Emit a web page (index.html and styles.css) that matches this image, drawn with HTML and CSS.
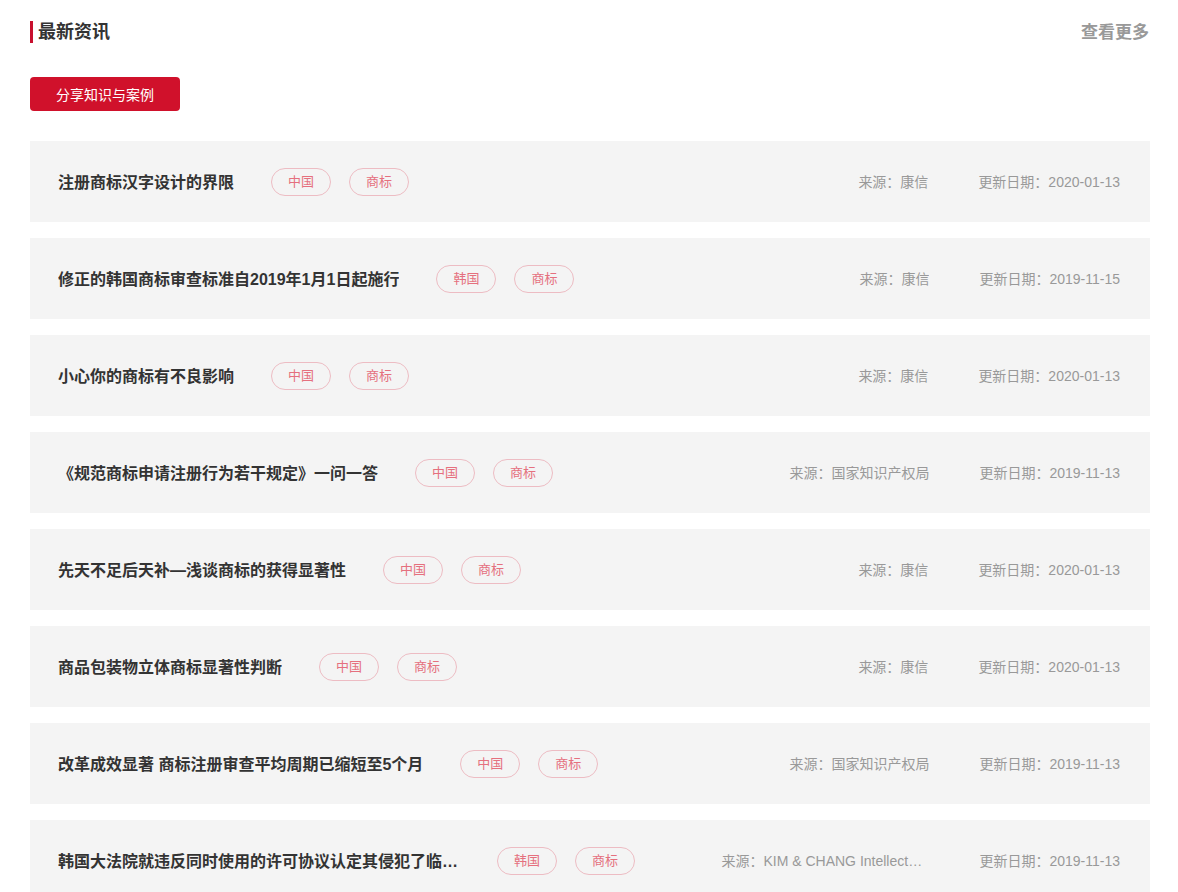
FILE: index.html
```html
<!DOCTYPE html>
<html lang="zh-CN">
<head>
    <meta charset="UTF-8">
    <title>最新资讯</title>
    <link rel="stylesheet" href="styles.css">
</head>
<body>
    <div class="news">
        <div class="news-head">
            <h2 class="news-title">最新资讯</h2>
            <a class="more" href="#">查看更多</a>
        </div>
        <button class="cat-btn">分享知识与案例</button>

        <ul class="news-list">
            <li class="item">
                <span class="item-title">注册商标汉字设计的界限</span>
                <span class="tag">中国</span><span class="tag">商标</span>
                <span class="source">来源：康信</span>
                <span class="date">更新日期：2020-01-13</span>
            </li>
            <li class="item">
                <span class="item-title">修正的韩国商标审查标准自2019年1月1日起施行</span>
                <span class="tag">韩国</span><span class="tag">商标</span>
                <span class="source">来源：康信</span>
                <span class="date">更新日期：2019-11-15</span>
            </li>
            <li class="item">
                <span class="item-title">小心你的商标有不良影响</span>
                <span class="tag">中国</span><span class="tag">商标</span>
                <span class="source">来源：康信</span>
                <span class="date">更新日期：2020-01-13</span>
            </li>
            <li class="item">
                <span class="item-title">《规范商标申请注册行为若干规定》一问一答</span>
                <span class="tag">中国</span><span class="tag">商标</span>
                <span class="source">来源：国家知识产权局</span>
                <span class="date">更新日期：2019-11-13</span>
            </li>
            <li class="item">
                <span class="item-title">先天不足后天补—浅谈商标的获得显著性</span>
                <span class="tag">中国</span><span class="tag">商标</span>
                <span class="source">来源：康信</span>
                <span class="date">更新日期：2020-01-13</span>
            </li>
            <li class="item">
                <span class="item-title">商品包装物立体商标显著性判断</span>
                <span class="tag">中国</span><span class="tag">商标</span>
                <span class="source">来源：康信</span>
                <span class="date">更新日期：2020-01-13</span>
            </li>
            <li class="item">
                <span class="item-title">改革成效显著 商标注册审查平均周期已缩短至5个月</span>
                <span class="tag">中国</span><span class="tag">商标</span>
                <span class="source">来源：国家知识产权局</span>
                <span class="date">更新日期：2019-11-13</span>
            </li>
            <li class="item">
                <span class="item-title">韩国大法院就违反同时使用的许可协议认定其侵犯了临时商标权</span>
                <span class="tag">韩国</span><span class="tag">商标</span>
                <span class="source">来源：KIM &amp; CHANG Intellectual Property</span>
                <span class="date">更新日期：2019-11-13</span>
            </li>
        </ul>
    </div>
</body>
</html>
```

FILE: styles.css
```css
body {
    margin: 0;
    background-color: #fff;
    font-family: "Liberation Sans", "Noto Sans CJK SC", sans-serif;
    color: #333;
}
.news {
    width: 1120px;
    padding: 19px 28px 0 30px;
}
.news-head {
    display: flex;
    justify-content: space-between;
    align-items: center;
    height: 26px;
    padding-right: 1px;
}
.news-title {
    margin: 0;
    padding-left: 5px;
    border-left: 3px solid #c8102e;
    font-size: 18px;
    line-height: 22px;
    font-weight: bold;
    color: #333;
}
.more {
    font-size: 17px;
    font-weight: bold;
    color: #999;
    text-decoration: none;
    margin-top: -4px;
}
.cat-btn {
    display: block;
    margin-top: 32px;
    width: 150px;
    height: 34px;
    border: none;
    border-radius: 4px;
    background-color: #d0112b;
    color: #fff;
    font-family: inherit;
    font-size: 14px;
    cursor: pointer;
}
.news-list {
    list-style: none;
    margin: 30px 0 0;
    padding: 0;
}
.item {
    display: flex;
    align-items: center;
    height: 81px;
    margin-bottom: 16px;
    padding: 0 30px 0 28px;
    background-color: #f4f4f4;
}
.item-title {
    max-width: 402px;
    margin-right: 37px;
    padding-bottom: 2px;
    font-size: 16px;
    font-weight: bold;
    color: #333;
    white-space: nowrap;
    overflow: hidden;
    text-overflow: ellipsis;
}
.tag {
    box-sizing: border-box;
    width: 60px;
    height: 28px;
    line-height: 26px;
    margin-right: 18px;
    border: 1px solid #edbcc3;
    border-radius: 14px;
    text-align: center;
    font-size: 13px;
    color: #e5707e;
}
.source {
    margin-left: auto;
    max-width: 208px;
    padding-bottom: 2px;
    font-size: 14px;
    color: #999;
    white-space: nowrap;
    overflow: hidden;
    text-overflow: ellipsis;
}
.date {
    margin-left: 50px;
    padding-bottom: 2px;
    font-size: 14px;
    color: #999;
    white-space: nowrap;
}
```
